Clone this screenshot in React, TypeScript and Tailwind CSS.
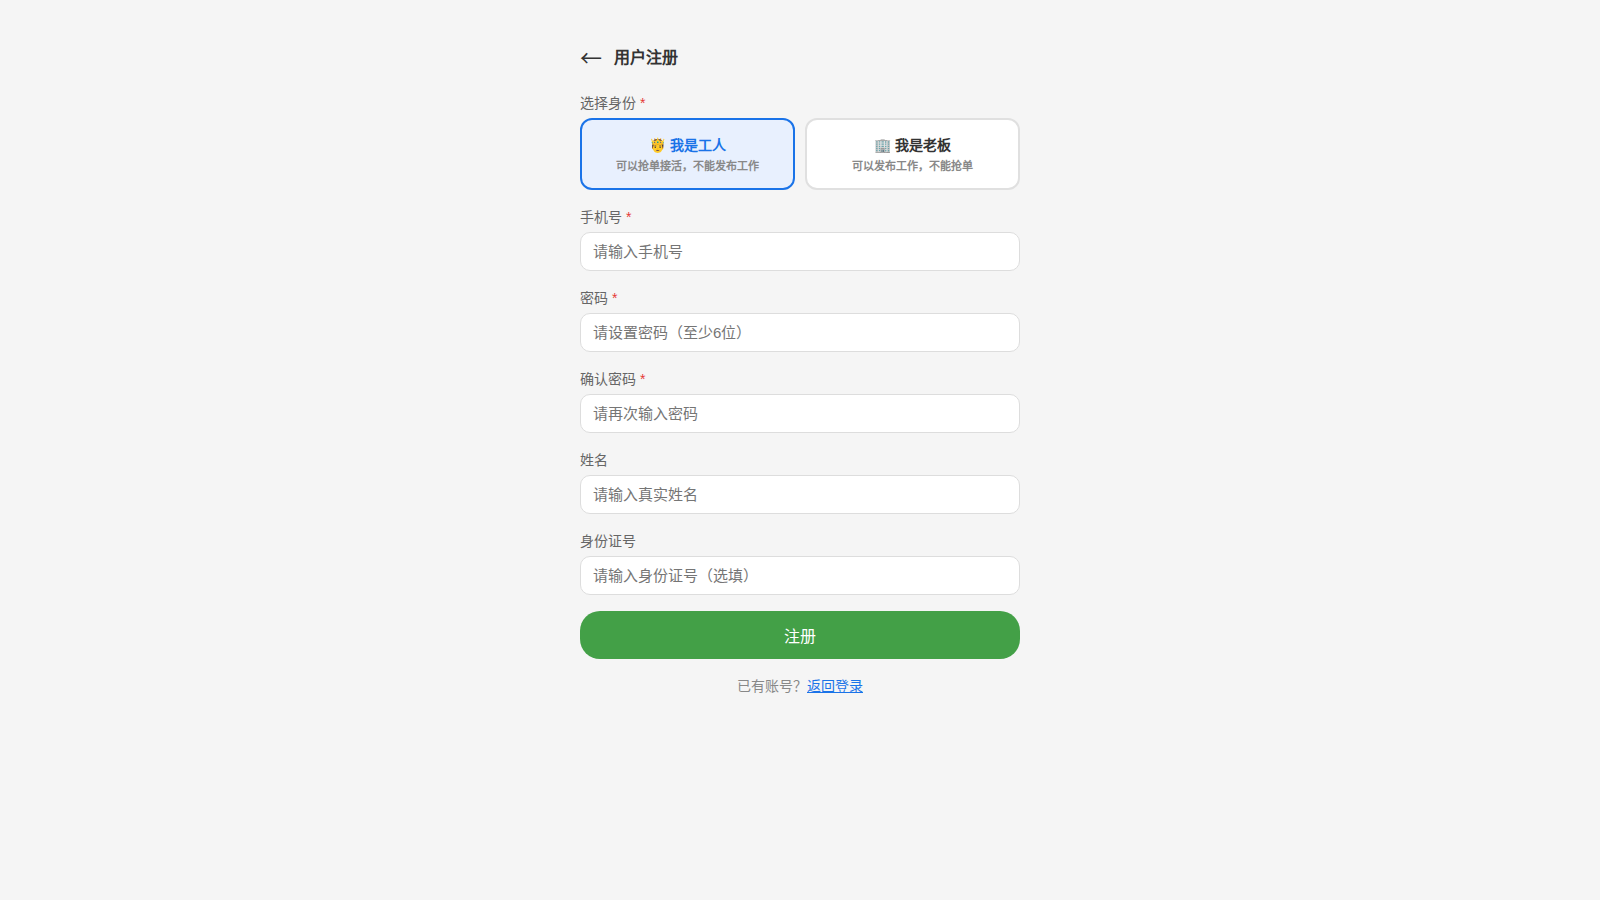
const fields = [
  { label: '手机号', placeholder: '请输入手机号', required: true },
  { label: '密码', placeholder: '请设置密码（至少6位）', required: true, type: 'password' },
  { label: '确认密码', placeholder: '请再次输入密码', required: true, type: 'password' },
  { label: '姓名', placeholder: '请输入真实姓名', required: false },
  { label: '身份证号', placeholder: '请输入身份证号（选填）', required: false },
]

function Label({ text, required }: { text: string; required?: boolean }) {
  return (
    <label className="block text-sm leading-[21px] text-[#666] mb-1">
      {text}
      {required && <span className="text-[#e53935]"> *</span>}
    </label>
  )
}

export default function App() {
  return (
    <div lang="zh-CN" className="min-h-screen bg-[#f5f5f5] font-[sans-serif]">
      <div className="w-[480px] mx-auto px-5 pt-[40px]">
        {/* Header */}
        <div className="flex items-center gap-3 h-9 mb-[17px]">
          <button className='pb-1 text-[22px] leading-none text-[#333] w-[22px] text-left font-["Noto_Sans_CJK_SC",sans-serif]'>←</button>
          <h1 className="text-base font-bold text-[#333]">用户注册</h1>
        </div>

        {/* Role selector */}
        <div className="mb-[17px]">
          <Label text="选择身份" required />
          <div className="grid grid-cols-2 gap-2.5">
            <button className="h-[72px] pt-px border-2 border-[#1a73e8] bg-[#e8f0fe] rounded-xl text-center">
              <div className="text-sm font-bold leading-[21px] text-[#1a73e8]">🤴 我是工人</div>
              <div className="text-[11px] font-bold leading-4 text-[#888] mt-[2px]">可以抢单接活，不能发布工作</div>
            </button>
            <button className="h-[72px] pt-px border-2 border-[#e0e0e0] bg-white rounded-xl text-center">
              <div className="text-sm font-bold leading-[21px] text-[#333]">🏢 我是老板</div>
              <div className="text-[11px] font-bold leading-4 text-[#888] mt-[2px]">可以发布工作，不能抢单</div>
            </button>
          </div>
        </div>

        {/* Fields */}
        {fields.map(f => (
          <div key={f.label} className="mb-[17px] last-of-type:mb-4">
            <Label text={f.label} required={f.required} />
            <input
              type={f.type ?? 'text'}
              placeholder={f.placeholder}
              className="block w-full h-[39px] px-3 bg-white border border-[#ddd] rounded-[10px] text-[15px] text-[#333] placeholder:text-[#757575] outline-none"
            />
          </div>
        ))}

        <button className="block w-full h-12 pt-1 bg-[#43a047] text-white text-base rounded-[20px]">注册</button>

        <p className="mt-[17px] text-sm leading-[21px] text-center text-[#888]">
          已有账号？
          <a href="#" className="text-[#1a73e8] underline">返回登录</a>
        </p>
      </div>
    </div>
  )
}
